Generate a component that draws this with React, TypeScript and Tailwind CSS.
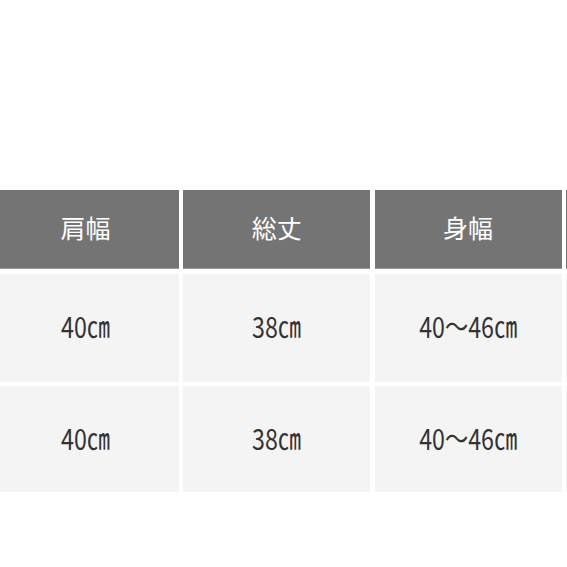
import React from "react";

const headers = ["肩幅", "総丈", "身幅", ""];
const rows = [
  ["40㎝", "38㎝", "40〜46㎝", ""],
  ["40㎝", "38㎝", "40〜46㎝", ""],
];

export default function App() {
  return (
    <div className="w-[567px] h-[567px] overflow-hidden bg-white" style={{ fontFamily: '"Noto Sans CJK JP", "Noto Sans", sans-serif' }}>
      <div className="pt-[190px] -ml-[8px] flex flex-col gap-[4.5px]">
        <div className="flex gap-[4.3px] h-[79px]">
          {headers.map((h, i) => (
            <div key={i} className="w-[187px] shrink-0 bg-[#747474] border-b border-[#9a9a9a] flex items-center justify-center text-white text-[25px] leading-none">
              <span className="-translate-y-[2px]">{h}</span>
            </div>
          ))}
        </div>
        {rows.map((r, ri) => (
          <div key={ri} className={`flex gap-[4.3px] ${ri === 0 ? "h-[108px]" : "h-[106px]"}`}>
            {r.map((c, i) => (
              <div key={i} className="w-[187px] shrink-0 bg-[#f4f4f4] flex items-center justify-center">
                <span className="inline-block scale-x-[0.8] -translate-y-[2px] text-[29px] leading-none text-[#333333]">{c}</span>
              </div>
            ))}
          </div>
        ))}
      </div>
    </div>
  );
}
